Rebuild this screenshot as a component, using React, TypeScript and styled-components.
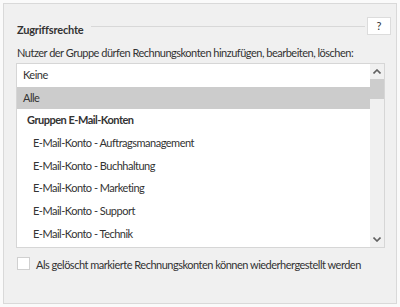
import styled, { createGlobalStyle } from 'styled-components';

const GlobalStyle = createGlobalStyle`
  body {
    margin: 0;
    background: #fafafa;
    font-family: Lato, "Noto Sans", sans-serif;
    font-size: 11px;
    letter-spacing: -0.5px;
    color: #333;
  }
`;

const Page = styled.div`
  padding: 3px;
  width: 400px;
  height: 307px;
  box-sizing: border-box;
`;

const Panel = styled.div`
  width: 394px;
  height: 301px;
  box-sizing: border-box;
  background: #f0f0f0;
  border: 1px solid #d9d9d9;
  padding: 13px 5px 0 12px;
`;

const HeadRow = styled.div`
  display: flex;
  align-items: flex-start;
  height: 20px;
`;

const Title = styled.span`
  font-weight: 700;
  line-height: 16px;
  letter-spacing: -0.2px;
  margin: 5px 0 0 1px;
  color: #333;
`;

const TitleLine = styled.div`
  flex: 1;
  height: 1px;
  background: #d8d8d8;
  margin: 9px 2px 0 8px;
`;

const HelpButton = styled.button`
  width: 24px;
  height: 18px;
  padding: 0;
  border: 1px solid #dcdcdc;
  background: #fff;
  font-family: inherit;
  font-size: 11px;
  color: #333;
  line-height: 14px;
`;

const Label = styled.div`
  line-height: 16px;
  margin: 8px 0 2px 1px;
  white-space: nowrap;
`;

const ListBox = styled.div`
  display: flex;
  width: 369px;
  height: 185px;
  box-sizing: border-box;
  border: 1px solid #d6d6d6;
  background: #fff;
  overflow: hidden;
`;

const Items = styled.div`
  flex: 1;
  overflow: hidden;
`;

const Item = styled.div<{ $selected?: boolean; $indent: number; $bold?: boolean }>`
  height: 22.7px;
  line-height: 22.7px;
  padding-left: ${(p) => p.$indent}px;
  background: ${(p) => (p.$selected ? '#cccccc' : 'transparent')};
  font-weight: ${(p) => (p.$bold ? 700 : 400)};
  white-space: nowrap;
`;

const ScrollBar = styled.div`
  width: 14px;
  display: flex;
  flex-direction: column;
  background: #f0f0f0;
`;

const Arrow = styled.div`
  height: 15px;
  display: flex;
  align-items: center;
  justify-content: center;
`;

const Track = styled.div`
  flex: 1;
`;

const Thumb = styled.div`
  height: 20px;
  background: #cdcdcd;
`;

const CheckRow = styled.label`
  display: flex;
  align-items: flex-start;
  margin-top: 9px;
  margin-left: 1px;
  gap: 6px;
`;

const Box = styled.span`
  flex-shrink: 0;
  width: 13px;
  height: 13px;
  box-sizing: border-box;
  border: 1px solid #d0d0d0;
  background: #fff;
`;

const CheckText = styled.span`
  line-height: 15px;
  white-space: nowrap;
`;

const entries = [
  { text: 'Keine', indent: 6 },
  { text: 'Alle', indent: 6, selected: true },
  { text: 'Gruppen E-Mail-Konten', indent: 10, bold: true },
  { text: 'E-Mail-Konto - Auftragsmanagement', indent: 16 },
  { text: 'E-Mail-Konto - Buchhaltung', indent: 16 },
  { text: 'E-Mail-Konto - Marketing', indent: 16 },
  { text: 'E-Mail-Konto - Support', indent: 16 },
  { text: 'E-Mail-Konto - Technik', indent: 16 },
];

function Chevron({ up }: { up?: boolean }) {
  return (
    <svg width="8" height="5" viewBox="0 0 8 5">
      <path
        d={up ? 'M0.5 4.5 L4 1 L7.5 4.5' : 'M0.5 0.5 L4 4 L7.5 0.5'}
        fill="none"
        stroke="#606060"
        strokeWidth="1.6"
      />
    </svg>
  );
}

function App() {
  return (
    <Page>
      <GlobalStyle />
      <Panel>
        <HeadRow>
          <Title>Zugriffsrechte</Title>
          <TitleLine />
          <HelpButton>?</HelpButton>
        </HeadRow>
        <Label>Nutzer der Gruppe dürfen Rechnungskonten hinzufügen, bearbeiten, löschen:</Label>
        <ListBox>
          <Items>
            {entries.map((e) => (
              <Item key={e.text} $indent={e.indent} $selected={e.selected} $bold={e.bold}>
                {e.text}
              </Item>
            ))}
          </Items>
          <ScrollBar>
            <Arrow>
              <Chevron up />
            </Arrow>
            <Track>
              <Thumb />
            </Track>
            <Arrow>
              <Chevron />
            </Arrow>
          </ScrollBar>
        </ListBox>
        <CheckRow>
          <Box />
          <CheckText>Als gelöscht markierte Rechnungskonten können wiederhergestellt werden</CheckText>
        </CheckRow>
      </Panel>
    </Page>
  );
}

export default App;
